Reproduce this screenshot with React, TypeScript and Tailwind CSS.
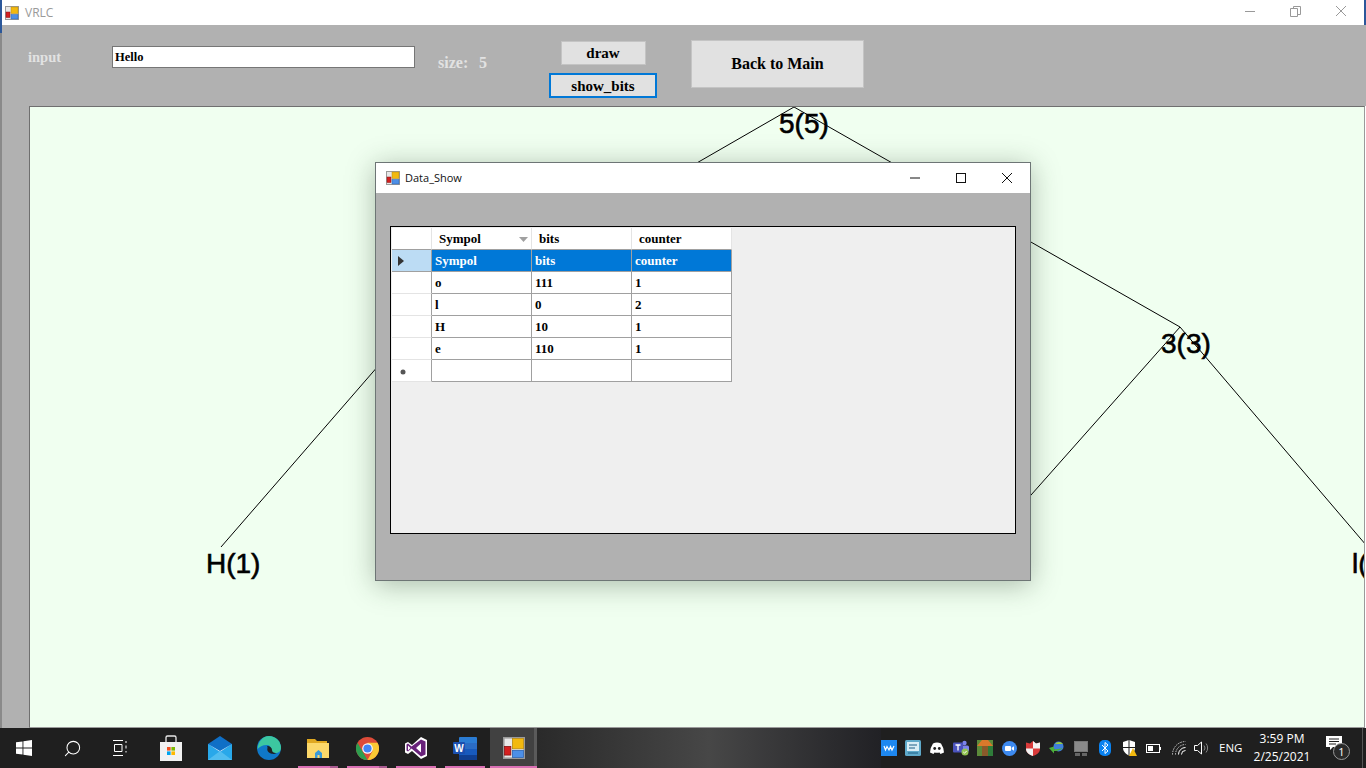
import { Search } from 'lucide-react';

const serif = "font-['Liberation_Serif',serif] font-bold";

function AppIcon({ size = 14 }: { size?: number }) {
  return (
    <svg width={size} height={size} viewBox="0 0 14 14">
      <rect x="0.5" y="0.5" width="13" height="13" fill="#e8e8e8" stroke="#9a9a9a" />
      <rect x="6" y="1" width="7" height="6.5" fill="#f2b90f" stroke="#b88a10" strokeWidth="0.5" />
      <rect x="1" y="6" width="4" height="5.5" fill="#d42020" stroke="#8a1010" strokeWidth="0.5" />
      <rect x="6" y="8.5" width="7" height="4.5" fill="#4d8fe6" stroke="#2a62b0" strokeWidth="0.5" />
    </svg>
  );
}

function TaskCell({ className, children }: { className: string; children?: React.ReactNode }) {
  return <div className={`h-full flex items-center justify-center ${className}`}>{children}</div>;
}

function PinnedApp({ className, split, children }: { className: string; split?: boolean; children?: React.ReactNode }) {
  return (
    <div className={`relative w-[40px] h-full flex items-center justify-center ${className}`}>
      {children}
      <div className="absolute bottom-0 left-0 right-0 h-[2px] bg-[#d96fb4]" />
      {split && <div className="absolute bottom-0 right-0 w-[8px] h-[2px] bg-[#a85a90]" />}
    </div>
  );
}

const rows = [
  ['o', '111', '1'],
  ['l', '0', '2'],
  ['H', '10', '1'],
  ['e', '110', '1'],
];

function DataCell({ children }: { children?: React.ReactNode }) {
  return <div className="w-[100px] h-[22px] pl-[3px] border-r border-b border-[#a0a0a0] bg-white text-black leading-[22px]">{children}</div>;
}

function RowHead({ children }: { children?: React.ReactNode }) {
  return <div className="w-[40px] h-[22px] flex items-center pl-[8px] pt-[2px] border-r border-b border-r-[#a0a0a0] border-b-[#e4e4e4] bg-white">{children}</div>;
}

function DataShow() {
  return (
    <div className="absolute left-[375px] top-[162px] w-[656px] h-[419px] flex flex-col border border-[#6d7575] bg-[#b1b1b1] shadow-[0_4px_26px_rgba(40,60,40,0.35)]">
      <div className="h-[30px] bg-white flex items-center pl-[10px] shrink-0">
        <AppIcon />
        <span className="ml-[5px] font-['Open_Sans',sans-serif] text-[11px] text-[#111]">Data_Show</span>
        <div className="ml-auto flex items-center h-full">
          <svg width="46" height="30" viewBox="0 0 46 30"><path d="M18 15h10" stroke="#111" /></svg>
          <svg width="46" height="30" viewBox="0 0 46 30"><rect x="18.5" y="10.5" width="9" height="9" fill="none" stroke="#111" /></svg>
          <svg width="46" height="30" viewBox="0 0 46 30"><path d="M18 10l10 10M28 10l-10 10" stroke="#111" /></svg>
        </div>
      </div>
      <div className={`mt-[33px] ml-[14px] w-[626px] h-[308px] border border-black bg-[#efefef] pl-px pt-px text-[13px] ${serif}`}>
        <div className="flex">
          <div className="w-[40px] h-[22px] border-r border-b border-r-[#e4e4e4] border-b-[#a0a0a0] bg-white" />
          <div className="relative w-[100px] h-[22px] pl-[7px] border-r border-b border-r-[#e4e4e4] border-b-[#a0a0a0] bg-white leading-[22px] text-black">
            Sympol
            <svg className="absolute right-[3px] top-[9px]" width="9" height="6" viewBox="0 0 9 6"><path d="M0 0h9L4.500 5z" fill="#a0a0a0" /></svg>
          </div>
          <div className="w-[100px] h-[22px] pl-[7px] border-r border-b border-r-[#e4e4e4] border-b-[#a0a0a0] bg-white leading-[22px] text-black">bits</div>
          <div className="w-[100px] h-[22px] pl-[7px] border-r border-b border-r-[#e4e4e4] border-b-[#a0a0a0] bg-white leading-[22px] text-black">counter</div>
        </div>
        <div className="flex">
          <div className="w-[40px] h-[22px] flex items-center pl-[6px] border-r border-b border-[#a0a0a0] bg-[#bcdcf4]">
            <svg width="6" height="10" viewBox="0 0 6 10"><path d="M0 0l6 5-6 5z" fill="#333" /></svg>
          </div>
          <div className="w-[100px] h-[22px] pl-[3px] border-r border-b border-[#a0a0a0] bg-[#0078d7] text-white leading-[22px]">Sympol</div>
          <div className="w-[100px] h-[22px] pl-[3px] border-r border-b border-[#a0a0a0] bg-[#0078d7] text-white leading-[22px]">bits</div>
          <div className="w-[100px] h-[22px] pl-[3px] border-r border-b border-[#a0a0a0] bg-[#0078d7] text-white leading-[22px]">counter</div>
        </div>
        {rows.map((row, index) => (
          <div className="flex" key={index}>
            <RowHead />
            <DataCell>{row[0]}</DataCell>
            <DataCell>{row[1]}</DataCell>
            <DataCell>{row[2]}</DataCell>
          </div>
        ))}
        <div className="flex">
          <RowHead>
            <svg width="6" height="6" viewBox="0 0 6 6"><circle cx="3" cy="3" r="2.500" fill="#555" /></svg>
          </RowHead>
          <DataCell />
          <DataCell />
          <DataCell />
        </div>
      </div>
    </div>
  );
}

function Canvas() {
  return (
    <div className="relative flex-1 min-w-0 ml-[27px] border-t border-l border-b border-r border-t-[#6f6f6f] border-l-[#6f6f6f] border-b-[#9a9a9a] border-r-[#9a9a9a] bg-[#f0fff0] overflow-hidden">
      <svg className="absolute left-[-30px] top-[-107px]" width="1366" height="768" viewBox="0 0 1366 768">
        <path d="M794 107L412 327L221 547M794 107L1180 327L1366 545M1180 327L1000 530" fill="none" stroke="#000" />
      </svg>
      <span className="absolute left-[749px] top-[1px] text-[28px] leading-[32px] font-['Liberation_Sans',sans-serif] text-black [-webkit-text-stroke:0.6px_#000]">5(5)</span>
      <span className="absolute left-[1131px] top-[221px] text-[28px] leading-[32px] font-['Liberation_Sans',sans-serif] text-black [-webkit-text-stroke:0.6px_#000]">3(3)</span>
      <span className="absolute left-[176px] top-[441px] text-[28px] leading-[32px] font-['Liberation_Sans',sans-serif] text-black [-webkit-text-stroke:0.6px_#000]">H(1)</span>
      <span className="absolute left-[1322px] top-[441px] text-[28px] leading-[32px] font-['Liberation_Sans',sans-serif] text-black [-webkit-text-stroke:0.6px_#000]">l(2)</span>
    </div>
  );
}

function Taskbar() {
  return (
    <div className="h-[40px] flex bg-[#1f1f1f] shrink-0 text-white font-['Open_Sans',sans-serif]">
      <TaskCell className="w-[48px]">
        <svg width="16" height="16" viewBox="0 0 16 16"><path d="M0 2.300L6.500 1.400V7.500H0zM7.400 1.300L16 0V7.500H7.400zM0 8.500H6.500V14.600L0 13.700zM7.400 8.500H16V16L7.400 14.700z" fill="#fff" /></svg>
      </TaskCell>
      <TaskCell className="w-[48px]">
        <Search size={19} strokeWidth={1.300} className="-scale-x-100" />
      </TaskCell>
      <TaskCell className="w-[48px]">
        <svg width="16" height="16" viewBox="0 0 16 16" fill="none" stroke="#fff"><path d="M1 .5h10M1 15.500h10M2.500 4.500h7.500v7H2.500zM14 1v2M14 5.500v3M14 11v1.500" /></svg>
      </TaskCell>
      <TaskCell className="w-[40px] ml-[7px]">
        <svg width="24" height="26" viewBox="0 0 24 26">
          <path d="M7 7V2.500A1.500 1.500 0 0 1 8.500 1h7A1.500 1.500 0 0 1 17 2.500V7" fill="none" stroke="#e8e8e8" strokeWidth="1.300" />
          <path d="M1 7h22v19H1z" fill="#f2f2f2" />
          <rect x="8" y="12" width="3.600" height="3.600" fill="#f25022" />
          <rect x="12.400" y="12" width="3.600" height="3.600" fill="#7fba00" />
          <rect x="8" y="16.400" width="3.600" height="3.600" fill="#00a4ef" />
          <rect x="12.400" y="16.400" width="3.600" height="3.600" fill="#ffb900" />
        </svg>
      </TaskCell>
      <TaskCell className="w-[40px] ml-[9px]">
        <svg width="24" height="24" viewBox="0 0 24 24">
          <path d="M0 8L12 0l12 8v16H0z" fill="#0f6fc6" />
          <path d="M0 8l12 8 12-8v16H0z" fill="#28a8ea" />
          <path d="M0 8l12 8 12-8-12 7z" fill="#d8f0ff" />
          <path d="M0 24l12-9 12 9z" fill="#50bdf0" />
        </svg>
      </TaskCell>
      <TaskCell className="w-[40px] ml-[9px]">
        <svg width="24" height="24" viewBox="0 0 24 24">
          <circle cx="12" cy="12" r="12" fill="#0f78c8" />
          <path d="M12 0a12 12 0 0 1 12 12c0 3-2.500 5-5.500 5-3 0-4-1.500-4-3 0-3-2-5-5-5-4 0-7 2-9 4C1 6 5.500 0 12 0z" fill="#3cc7a0" />
          <path d="M10 10c3 0 5 2 5 4 0 2 2 3.500 4.500 3-1.500 1-3 1-4.500.8-3-.5-5.500-3-4.500-5.800 0-.8 0-1.500-.5-2z" fill="#1f1f1f" />
        </svg>
      </TaskCell>
      <PinnedApp className="ml-[9px]" split>
        <svg width="22" height="20" viewBox="0 0 22 20">
          <path d="M0 1h8l2 2h10v3H0z" fill="#e0a820" />
          <path d="M0 5h22v15H0z" fill="#fcd86a" />
          <path d="M8 20v-5l3.500-3 3.500 3v5h-2.500v-3h-2v3z" fill="#3a9ad9" />
        </svg>
      </PinnedApp>
      <PinnedApp className="ml-[9px]" split>
        <svg width="23" height="23" viewBox="0 0 24 24">
          <circle cx="12" cy="12" r="12" fill="#dd4b39" />
          <path d="M12 24A12 12 0 0 1 1.600 6L7 15.500 12 24z" fill="#2e9e4f" />
          <path d="M12 6h10.400A12 12 0 0 1 12 24l5.300-9.500L12 6z" fill="#fcc934" />
          <circle cx="12" cy="12" r="5.500" fill="#fff" />
          <circle cx="12" cy="12" r="4.300" fill="#4285f4" />
        </svg>
      </PinnedApp>
      <PinnedApp className="ml-[9px]">
        <svg width="24" height="24" viewBox="0 0 24 24">
          <path d="M17 1l6 3v16l-6 3L8 15l-4 3-3-1.500V7.500L4 6l4 3z" fill="#fff" />
          <path d="M17 3.500l4.500 2v13l-4.500 2-9.500-8-3.500 3-1.500-1v-6l1.500-1 3.500 3zM17 7.500L12 12l5 4.500zM4 9.500v5l2.500-2.500z" fill="#68217a" />
        </svg>
      </PinnedApp>
      <PinnedApp className="ml-[9px]">
        <svg width="24" height="24" viewBox="0 0 24 24">
          <rect x="6" y="1" width="18" height="23" rx="1" fill="#2b7cd3" />
          <rect x="6" y="7" width="18" height="6" fill="#2b6cc4" />
          <rect x="6" y="13" width="18" height="6" fill="#185abd" />
          <rect x="6" y="19" width="18" height="5" fill="#103f91" />
          <rect x="0" y="6" width="12" height="12" rx="1" fill="#1a4fb0" />
          <text x="6" y="15.500" textAnchor="middle" fontSize="10" fontWeight="700" fill="#fff" fontFamily="'Liberation Sans', sans-serif">W</text>
        </svg>
      </PinnedApp>
      <PinnedApp className="ml-[5px] w-[47px] bg-[#414141]">
        <AppIcon size={22} />
        <div className="absolute top-0 bottom-0 right-0 w-[3px] bg-[#5a5a5a]" />
      </PinnedApp>
      <div className="w-[344px] h-full bg-linear-to-r from-[#2a2a2a] via-[#474747] to-[#212125]" />
      <Tray />
    </div>
  );
}

function Tray() {
  return (
    <div className="flex-1 flex items-center">
      <svg width="16" height="16" viewBox="0 0 16 16"><rect width="16" height="16" fill="#1e88f0" /><path d="M3 6l1.500 4L6 6.500 8 10l1.500-3.500L11 10l2-4" fill="none" stroke="#fff" strokeWidth="1.200" /></svg>
      <svg className="ml-[8px]" width="16" height="16" viewBox="0 0 16 16"><rect width="16" height="16" rx="1.500" fill="#5fa9c9" /><rect x="2" y="2" width="12" height="9" fill="#d9eef6" /><path d="M3 13h10M4 5h8M4 8h6" stroke="#1d5f86" /></svg>
      <svg className="ml-[9px]" width="14" height="12" viewBox="0 0 14 12"><path d="M3 1.500Q7-.5 11 1.500 14 6 14 10.500L10.500 12 9.500 10.500Q7 11 4.500 10.500L3.500 12 0 10.500Q0 6 3 1.500z" fill="#fff" /><circle cx="4.700" cy="6.500" r="1.400" fill="#1f1f1f" /><circle cx="9.300" cy="6.500" r="1.400" fill="#1f1f1f" /></svg>
      <svg className="ml-[9px]" width="16" height="16" viewBox="0 0 16 16"><circle cx="11.500" cy="3" r="2.200" fill="#7b83eb" /><rect x="8" y="5.500" width="8" height="6" rx="1.500" fill="#7b83eb" /><rect x="0" y="2.500" width="10" height="10" rx="1" fill="#4b53bc" /><path d="M2.500 5h5M5 5v5.500" stroke="#fff" strokeWidth="1.300" /><circle cx="12" cy="12" r="3.500" fill="#92c353" /><path d="M10.300 12l1.200 1.200 2.100-2.200" fill="none" stroke="#fff" /></svg>
      <svg className="ml-[8px]" width="16" height="16" viewBox="0 0 16 16"><rect width="16" height="16" fill="#5c8a3a" /><path d="M0 6L5 0h6l5 6z" fill="#d9792b" /><rect x="5" y="6" width="6" height="10" fill="#8a5a2a" /><rect x="11" y="6" width="5" height="10" fill="#2f7d3a" /></svg>
      <svg className="ml-[9px]" width="15" height="15" viewBox="0 0 15 15"><circle cx="7.500" cy="7.500" r="7.500" fill="#3d8af0" /><rect x="3" y="5" width="6" height="5" rx="1" fill="#fff" /><path d="M9.700 6.800L12 5.200v4.600L9.700 8.200z" fill="#fff" /></svg>
      <svg className="ml-[9px]" width="14" height="15" viewBox="0 0 14 15"><path d="M0 1.500L4 2.500 7 0l3 2.500 4-1V8c0 3.500-3.500 6-7 7-3.500-1-7-3.500-7-7z" fill="#d93a3a" /><path d="M7 0l3 2.500 4-1V7.500H7zM0 7.500h7V15C3.500 14 0 11.500 0 8z" fill="#f3f3f3" /></svg>
      <svg className="ml-[9px]" width="16" height="14" viewBox="0 0 16 14"><circle cx="9.500" cy="5.500" r="5" fill="#3f7fd9" /><path d="M6 3a5 5 0 0 1 8 0z" fill="#9ccc3c" /><path d="M0 7l5 5.500V10c3 0 6-.5 9-3-3 1-6 1.500-9 1V5.500z" fill="#4caf3c" /></svg>
      <svg className="ml-[9px]" width="14" height="15" viewBox="0 0 14 15"><path d="M0 0h14v11H0z" fill="#777" /><rect x="1" y="1" width="12" height="9" fill="#8a8a8a" /><path d="M1 12h5v3H1zM8 12h5v3H8z" fill="#666" /></svg>
      <svg className="ml-[11px]" width="12" height="16" viewBox="0 0 12 16"><rect width="12" height="16" rx="5" fill="#0a82f0" /><path d="M3 5l6 6-3 2.500v-11l3 2.500-6 6" fill="none" stroke="#fff" /></svg>
      <svg className="ml-[11px]" width="15" height="16" viewBox="0 0 15 16"><path d="M7 0l6 2v6c0 3.500-3 6-6 7.500C4 14 1 11.500 1 8V2z" fill="#fff" /><path d="M7 0v15.500M1 7.500h12" stroke="#1f1f1f" /><path d="M11 8l4 8H7z" fill="#f2b90f" /></svg>
      <svg className="ml-[9px]" width="15" height="9" viewBox="0 0 15 9"><rect x=".5" y=".5" width="13" height="8" fill="none" stroke="#fff" /><rect x="2" y="2" width="5" height="5" fill="#fff" /><rect x="14" y="3" width="1" height="3" fill="#fff" /></svg>
      <svg className="ml-[11px]" width="14" height="14" viewBox="0 0 14 14" fill="none" stroke="#ccc"><path d="M.5 13.500a13 13 0 0 1 13-13M3.500 13.500a10 10 0 0 1 10-10" strokeDasharray="1.500 1" /><path d="M6.500 13.500a7 7 0 0 1 7-7M9.500 13.500a4 4 0 0 1 4-4" stroke="#fff" /></svg>
      <svg className="ml-[8px]" width="16" height="14" viewBox="0 0 16 14" fill="none" stroke="#fff"><path d="M.5 4.500h3L7.500 1v12l-4-3.500h-3z" /><path d="M10 4.500a4 4 0 0 1 0 5M12 2.500a7 7 0 0 1 0 9" stroke="#888" /></svg>
      <span className="ml-[9px] w-[24px] text-[11.5px]">ENG</span>
      <div className="w-[78px] flex flex-col items-center text-[12px] leading-[18px]">
        <span>3:59 PM</span>
        <span>2/25/2021</span>
      </div>
      <div className="relative ml-[5px] w-[24px] h-[24px]">
        <svg width="16" height="15" viewBox="0 0 16 15"><path d="M0 0h16v11H7l-3 3v-3H0z" fill="#fff" /><path d="M3 3h10M3 5.500h10M3 8h7" stroke="#1f1f1f" /></svg>
        <div className="absolute left-[7px] top-[7px] w-[17px] h-[17px] rounded-full bg-[#2a2a2a] border border-[#999] flex items-center justify-center text-[11px] leading-none">1</div>
      </div>
      <div className="ml-[12px] w-px h-full bg-[#555]" />
    </div>
  );
}

export default function App() {
  return (
    <div className="relative w-[1366px] h-[768px] flex flex-col overflow-hidden bg-white">
      <div className="h-[25px] flex items-center bg-white shrink-0 pl-[5px] pr-[2px]">
        <AppIcon />
        <span className="ml-[6px] font-['Open_Sans',sans-serif] text-[12px] text-[#9a9a9a]">VRLC</span>
        <div className="ml-auto flex items-center">
          <svg width="46" height="25" viewBox="0 0 46 25"><path d="M19 11.500h10" stroke="#999" /></svg>
          <svg width="46" height="25" viewBox="0 0 46 25" fill="none" stroke="#999"><path d="M18.500 8.500h7v8h-7zM21.500 8.500v-2h7v8h-3" /></svg>
          <svg width="46" height="25" viewBox="0 0 46 25"><path d="M18 6l10 10M28 6L18 16" stroke="#999" /></svg>
        </div>
      </div>
      <div className={`h-[81px] flex items-start shrink-0 bg-[#b1b1b1] border-l-2 border-[#8a8a8a] pl-[26px] text-[#e2e2e2] ${serif}`}>
        <span className="w-[84px] mt-[23px] text-[14.5px] leading-[18px]">input</span>
        <div className="w-[303px] h-[22px] mt-[21px] pl-[2px] bg-white border border-[#767676] text-[12.500px] leading-[21px] text-black">Hello</div>
        <span className="w-[41px] ml-[23px] mt-[29px] text-[16px] leading-[18px]">size:</span>
        <span className="w-[70px] mt-[29px] text-[16px] leading-[18px]">5</span>
        <div className="w-[108px] mt-[15px] flex flex-col items-center">
          <div className="w-[85px] h-[24px] mt-px bg-[#e1e1e1] border border-[#c4c4c4] text-[15px] leading-[22px] text-center text-black">draw</div>
          <div className="w-[108px] h-[25px] mt-[8px] bg-[#e1e1e1] border-2 border-[#0078d7] text-[15px] leading-[23px] text-center text-black">show_bits</div>
        </div>
        <div className="w-[173px] h-[48px] ml-[34px] mt-[15px] bg-[#e1e1e1] border border-[#c4c4c4] text-[16px] leading-[46px] text-center text-black">Back to Main</div>
      </div>
      <div className="h-[622px] flex shrink-0 bg-[#b1b1b1] border-l-2 border-r border-l-[#8a8a8a] border-r-white">
        <Canvas />
      </div>
      <Taskbar />
      <DataShow />
      {/* window edge peeking from behind */}
      <div className="absolute left-0 top-0 w-[2px] h-[33px] bg-[#2b579a]" />
      <div className="absolute right-0 top-0 w-[2px] h-[25px] bg-[#2b579a]" />
    </div>
  );
}
